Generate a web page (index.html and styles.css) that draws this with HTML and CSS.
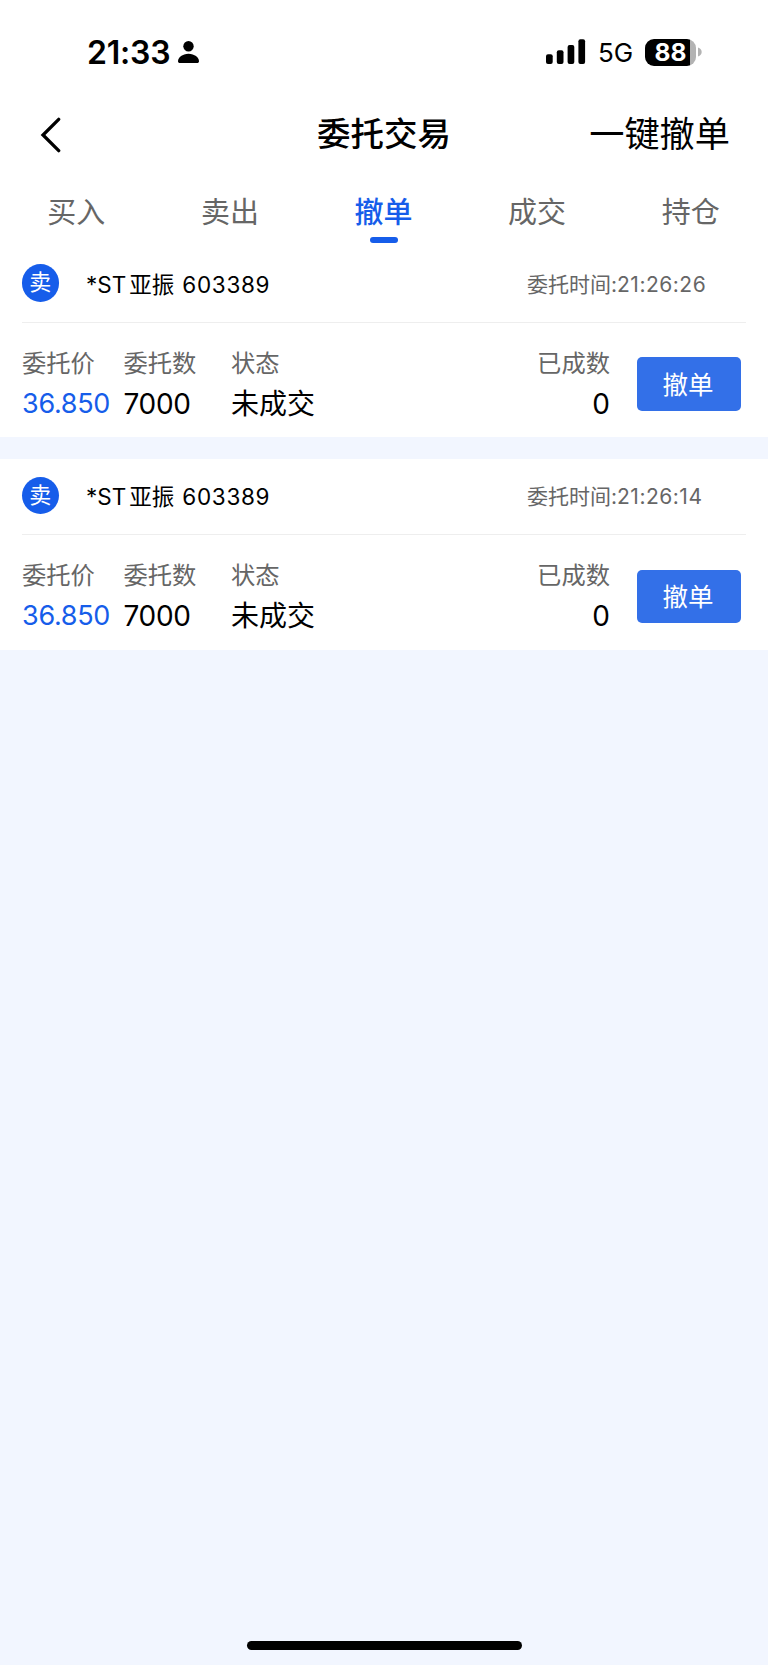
FILE: index.html
```html
<!DOCTYPE html>
<html lang="zh-CN">
<head>
    <meta charset="UTF-8">
    <meta name="viewport" content="width=device-width, initial-scale=1.0">
    <title>委托交易</title>
    <link rel="stylesheet" href="styles.css">
</head>
<body>
    <div class="status-bar">
        <span class="time">21:33</span>
        <svg class="person" width="22" height="24" viewBox="0 0 22 24">
            <circle cx="10.5" cy="6.2" r="5.2"/>
            <path d="M2.1 23C.7 23 0 22.2 0 21.2 0 17.6 4.5 13.8 10.5 13.8S21 17.6 21 21.200c0 1-.7 1.800-2.100 1.800z"/>
        </svg>
        <svg class="signal" width="40" height="26" viewBox="0 0 40 26">
            <rect x="0" y="15.300" width="6.700" height="9.700" rx="2"/>
            <rect x="10.800" y="11.200" width="6.700" height="13.800" rx="2"/>
            <rect x="21.600" y="5.900" width="6.700" height="19.100" rx="2"/>
            <rect x="32.400" y="0.300" width="6.700" height="24.700" rx="2"/>
        </svg>
        <span class="network">5G</span>
        <div class="battery"><span>88</span></div>
        <svg class="battery-cap" width="4" height="10" viewBox="0 0 4 10">
            <path d="M0 .5C2.300 1.200 3.700 3 3.700 5S2.300 8.800 0 9.500z"/>
        </svg>
    </div>

    <div class="header">
        <div class="back">
            <svg width="22" height="36" viewBox="0 0 22 36">
                <path d="M18.700 2.300L3 18l15.700 15.700"/>
            </svg>
        </div>
        <h1>委托交易</h1>
        <div class="cancel-all">一键撤单</div>
    </div>

    <ul class="tabs">
        <li>买入</li>
        <li>卖出</li>
        <li class="active">撤单</li>
        <li>成交</li>
        <li>持仓</li>
    </ul>

    <div class="orders">
        <div class="order">
            <div class="order-top">
                <span class="side">卖</span>
                <span class="stock"><span class="prefix">*ST</span>亚振<span class="code">603389</span></span>
                <span class="order-time">委托时间:<span>21:26:26</span></span>
            </div>
            <div class="order-info">
                <dl class="price"><dt>委托价</dt><dd>36.850</dd></dl>
                <dl class="count"><dt>委托数</dt><dd>7000</dd></dl>
                <dl class="state"><dt>状态</dt><dd>未成交</dd></dl>
                <dl class="done"><dt>已成数</dt><dd>0</dd></dl>
                <button class="btn-cancel">撤单</button>
            </div>
        </div>
        <div class="order">
            <div class="order-top">
                <span class="side">卖</span>
                <span class="stock"><span class="prefix">*ST</span>亚振<span class="code">603389</span></span>
                <span class="order-time">委托时间:<span>21:26:14</span></span>
            </div>
            <div class="order-info">
                <dl class="price"><dt>委托价</dt><dd>36.850</dd></dl>
                <dl class="count"><dt>委托数</dt><dd>7000</dd></dl>
                <dl class="state"><dt>状态</dt><dd>未成交</dd></dl>
                <dl class="done"><dt>已成数</dt><dd>0</dd></dl>
                <button class="btn-cancel">撤单</button>
            </div>
        </div>
    </div>

    <div class="home-bar"></div>
</body>
</html>
```
FILE: styles.css
```css
*{
    margin: 0;
    padding: 0;
    list-style: none;
    box-sizing: border-box;
}
body{
    display: flex;
    flex-direction: column;
    width: 768px;
    height: 1665px;
    background: #f2f6ff;
    font-family: Inter, "Noto Sans CJK SC", sans-serif;
    color: #000;
    white-space: nowrap;
}

/* 状态栏 */
.status-bar{
    display: flex;
    align-items: center;
    height: 104px;
    padding: 0 66px 0 87px;
    background: #fff;
}
.time{
    width: 91px;
    padding-top: 1px;
    font-size: 32px;
    font-weight: 600;
    letter-spacing: -0.200px;
}
.signal{
    margin-left: auto;
    margin-right: 12px;
}
.network{
    width: 35px;
    padding-top: 1px;
    font-size: 26px;
}
.battery{
    width: 51px;
    height: 27px;
    margin-left: 12px;
    border-radius: 9px;
    background: linear-gradient(to right, #000 45px, #b3b3b3 45px);
    color: #fff;
    font-size: 24.500px;
    font-weight: 700;
    line-height: 27px;
    text-align: center;
}
.battery-cap{
    margin-left: 2px;
    fill: #b3b3b3;
}

/* 标题 */
.header{
    display: grid;
    grid-template-columns: 200px 1fr 200px;
    align-items: center;
    height: 62px;
    padding: 0 38px;
    background: #fff;
}
.back{
    height: 36px;
    padding-left: 1.500px;
}
.back path{
    fill: none;
    stroke: #000;
    stroke-width: 3.300;
    stroke-linecap: round;
}
.header h1{
    padding-bottom: 2px;
    font-size: 33.500px;
    font-weight: 500;
    line-height: 50px;
    text-align: center;
}
.cancel-all{
    padding-bottom: 2px;
    font-size: 35.200px;
    line-height: 50px;
    text-align: right;
}

/* 选项卡 */
.tabs{
    display: grid;
    grid-template-columns: repeat(5, 1fr);
    height: 80px;
    background: #fff;
}
.tabs li{
    display: flex;
    flex-direction: column;
    align-items: center;
    padding-top: 26px;
    color: #666;
    font-size: 29px;
    line-height: 42px;
    text-indent: -1px;
}
.tabs .active{
    color: #165dea;
    font-weight: 500;
}
.tabs .active::after{
    content: "";
    width: 28px;
    height: 6px;
    margin-top: 3px;
    border-radius: 3px;
    background: #165dea;
}

/* 委托列表 */
.orders{
    display: grid;
    gap: 21.500px;
}
.order{
    height: 191px;
    padding: 0 22px;
    background: #fff;
}
.order-top{
    display: flex;
    align-items: center;
    height: 76.500px;
    padding: 0 20px 2px 0;
    border-bottom: 1.500px solid #eee;
}
.side{
    width: 37.500px;
    height: 37.500px;
    margin-left: -0.500px;
    border-radius: 50%;
    background: #165dea;
    color: #fff;
    font-size: 22px;
    line-height: 37px;
    text-align: center;
}
.stock{
    margin-left: 27px;
    font-size: 22.500px;
}
.prefix{
    margin-right: 3px;
}
.code{
    margin-left: 8px;
    letter-spacing: 0.700px;
}
.order-time{
    width: 199px;
    margin-left: auto;
    color: #666;
    font-size: 21px;
}
.order-time span{
    letter-spacing: 0.500px;
}
.order-info{
    display: flex;
    padding-top: 22px;
}
.order-info dt{
    color: #666;
    font-size: 24.300px;
    line-height: 36px;
}
.order-info dd{
    font-size: 28px;
    line-height: 46px;
}
.price{
    width: 101.500px;
}
.order-info .price dd{
    color: #165dea;
    font-size: 27px;
    letter-spacing: -0.300px;
}
.count{
    width: 107.500px;
}
.order-info .count dd{
    letter-spacing: -0.300px;
}
.done{
    margin-left: auto;
    margin-right: 27px;
    text-align: right;
}
.btn-cancel{
    width: 104px;
    height: 53.500px;
    margin: 12.500px 5px 0 0;
    padding: 0 2px 3px 0;
    border: none;
    border-radius: 5px;
    background: #3370e8;
    color: #fff;
    font-family: inherit;
    font-size: 25.500px;
}

.home-bar{
    width: 275px;
    height: 9px;
    margin: auto auto 15px;
    border-radius: 5px;
    background: #000;
}
```
